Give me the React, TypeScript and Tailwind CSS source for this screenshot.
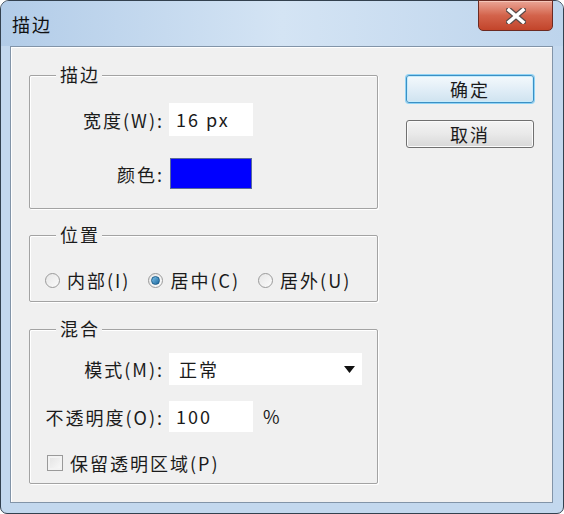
import type { ReactNode } from "react";

const FONT = { fontFamily: '"Noto Sans CJK SC", "Noto Sans", sans-serif' };

function Group({ title, className, children }: { title: string; className: string; children: ReactNode }) {
  return (
    <div className={`relative rounded-[2px] border border-[#a3a3a3] shadow-[inset_1px_1px_0_#ffffff,1px_1px_0_#ffffff] ${className}`}>
      <span className="absolute left-[26px] top-[-14px] bg-[#f0f0f0] pl-[4px] pr-[2px] text-[18px] leading-[24px] tracking-[2px]">
        {title}
      </span>
      {children}
    </div>
  );
}

function Label({ children }: { children: ReactNode }) {
  return <div className="w-[134px] shrink-0 text-right text-[18px] leading-[24px] tracking-[2px]">{children}</div>;
}

function Radio({ checked, label }: { checked?: boolean; label: string }) {
  return (
    <div className="flex items-center gap-[7px]">
      <span className="flex h-[15px] w-[15px] items-center justify-center rounded-full border border-[#9a9a9a] bg-gradient-to-br from-[#e6e6e6] to-[#fbfbfb]">
        {checked && (
          <span className="h-[9px] w-[9px] rounded-full border border-[#1c5d8a] bg-gradient-to-br from-[#7ac0e8] to-[#1a6aa0]" />
        )}
      </span>
      <span className="text-[18px] leading-[24px] tracking-[2px]">{label}</span>
    </div>
  );
}

export default function App() {
  return (
    <div className="h-[514px] w-[564px] bg-white text-[#1b1b1b]" style={FONT}>
      <div className="relative flex h-full w-full flex-col rounded-t-[9px] rounded-b-[7px] border border-[#33414f] bg-[#c3d8ee] px-[9px] pb-[10px] pr-[10px]">
        <div className="-mx-[9px] -mr-[10px] flex h-[45px] items-center rounded-t-[8px] bg-gradient-to-r from-[#b2cce8] via-[#d4e4f4] to-[#bdd4ec] pl-[11px]">
          <span className="text-[18px] leading-[24px] tracking-[2px] text-[#111]">描边</span>
        </div>
        <div className="absolute right-[10px] top-[-1px] flex h-[31px] w-[75px] items-center justify-center rounded-b-[5px] border border-[#6b2a22] bg-gradient-to-b from-[#e9a596] via-[#d3634b] to-[#c2442a] shadow-[inset_0_1px_0_#f5c5b8]">
          <svg width="20" height="16" viewBox="0 0 20 16">
            <path d="M3 2 L17 14 M17 2 L3 14" stroke="#5a4a48" strokeWidth="6" strokeLinecap="square" />
            <path d="M3 2 L17 14 M17 2 L3 14" stroke="#ffffff" strokeWidth="3.5" strokeLinecap="square" />
          </svg>
        </div>

        <div className="flex flex-1 border border-[#8294a8] bg-[#f0f0f0] shadow-[inset_1px_1px_0_#ffffff]">
          <div className="ml-[18px] mt-[28px] flex w-[349px] flex-col">
            <Group title="描边" className="h-[134px]">
              <div className="mt-[27px] flex items-center">
                <Label>宽度(W):</Label>
                <div className="ml-[5px] flex h-[33px] w-[84px] items-center bg-white pl-[7px] text-[18px] tracking-[2px]">16 px</div>
              </div>
              <div className="mt-[22px] flex items-center">
                <Label>颜色:</Label>
                <div className="ml-[6px] h-[31px] w-[82px] border border-[#5a6a9a] bg-[#0000ff]" />
              </div>
            </Group>

            <Group title="位置" className="mt-[26px] h-[67px]">
              <div className="ml-[15px] mt-[32px] flex items-center gap-[18px]">
                <Radio label="内部(I)" />
                <Radio checked label="居中(C)" />
                <Radio label="居外(U)" />
              </div>
            </Group>

            <Group title="混合" className="mt-[27px] h-[155px]">
              <div className="mt-[23px] flex items-center">
                <Label>模式(M):</Label>
                <div className="ml-[5px] flex h-[32px] w-[193px] items-center justify-between bg-white pl-[10px] pr-[7px] text-[18px] tracking-[2px]">
                  <span>正常</span>
                  <svg width="11" height="7" viewBox="0 0 11 7">
                    <path d="M0 0 H11 L5.5 7 Z" fill="#111" />
                  </svg>
                </div>
              </div>
              <div className="mt-[16px] flex items-center">
                <Label>不透明度(O):</Label>
                <div className="ml-[5px] flex h-[31px] w-[84px] items-center bg-white pl-[7px] text-[18px] tracking-[2px]">100</div>
                <span className="ml-[10px] text-[18px]">%</span>
              </div>
              <div className="ml-[17px] mt-[19px] flex items-center gap-[7px]">
                <span className="h-[16px] w-[16px] border border-[#9a9a9a] bg-gradient-to-br from-[#e2e2e2] to-[#fafafa] shadow-[inset_0_0_0_2px_#f3f3f3]" />
                <span className="text-[18px] leading-[24px] tracking-[2px]">保留透明区域(P)</span>
              </div>
            </Group>
          </div>

          <div className="ml-[28px] mt-[28px] flex w-[128px] flex-col gap-[17px]">
            <button className="h-[28px] rounded-[3px] border border-[#3c8fc4] bg-gradient-to-b from-[#f4f9fc] via-[#e2eef7] to-[#cfe3f0] text-[18px] leading-none tracking-[2px] shadow-[0_0_0_1px_#8ed3f5,inset_0_0_0_1px_#c6ecfc]">
              确定
            </button>
            <button className="h-[28px] rounded-[3px] border border-[#707070] bg-gradient-to-b from-[#f4f4f4] via-[#e9e9e9] to-[#d8d8d8] text-[18px] leading-none tracking-[2px] shadow-[inset_0_0_0_1px_#fbfbfb]">
              取消
            </button>
          </div>
        </div>
      </div>
    </div>
  );
}
